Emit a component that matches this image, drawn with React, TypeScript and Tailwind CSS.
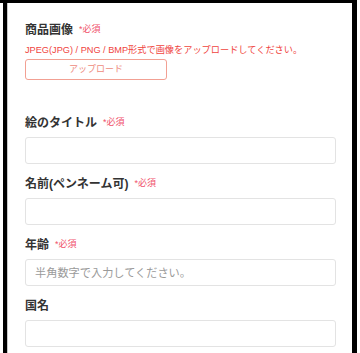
const fontStack = '"Liberation Sans", "Noto Sans CJK JP", sans-serif';

const Required = () => (
  <span className="ml-[6px] text-[9px] font-normal text-[#f0506a]">*必須</span>
);

const Field = ({ label, required, placeholder }: { label: string; required?: boolean; placeholder?: string }) => (
  <div className="mb-[11px]">
    <div className="flex h-[18px] items-center mb-[5px]">
      <span className="text-[12px] font-bold text-[#333]">{label}</span>
      {required && <Required />}
    </div>
    <input
      className="block h-[27px] w-[311px] rounded-[3px] border border-[#e3e3e3] bg-white px-[9px] text-[11.2px] text-[#333] placeholder:text-[#9a9a9a] outline-none"
      placeholder={placeholder}
    />
  </div>
);

export default function App() {
  return (
    <div className="h-[353px] w-[360px] overflow-hidden bg-white" style={{ fontFamily: fontStack }}>
      <div className="h-[353px] w-[357px] border-t-[3px] border-black">
        <div className="ml-[3px] h-full border-l-4 border-r-[5px] border-black">
          <div className="h-full border-l border-[#c8c8c8] pl-[17px] pt-[18px]">
            <div className="flex h-[18px] items-center">
              <span className="text-[12px] font-bold text-[#333]">商品画像</span>
              <Required />
            </div>
            <p className="mt-[6px] h-[10px] text-[9.2px] leading-[10px] text-[#f0443e]">
              JPEG(JPG) / PNG / BMP形式で画像をアップロードしてください。
            </p>
            <button className="mt-[4px] flex h-[21px] w-[142px] items-center justify-center rounded-[3px] border border-[#f2a093] text-[9px] text-[#ee8c80]">
              アップロード
            </button>
            <div className="mt-[34px]">
              <Field label="絵のタイトル" required />
              <Field label="名前(ペンネーム可)" required />
              <Field label="年齢" required placeholder="半角数字で入力してください。" />
              <Field label="国名" />
            </div>
          </div>
        </div>
      </div>
    </div>
  );
}
